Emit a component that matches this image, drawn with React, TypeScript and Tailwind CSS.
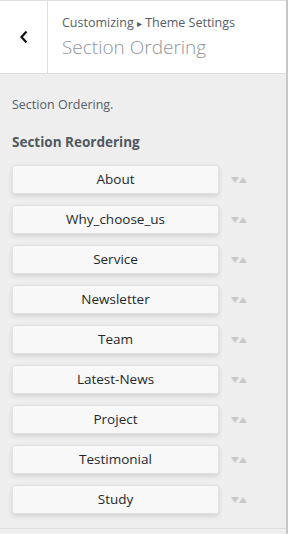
const sections = [
  'About',
  'Why_choose_us',
  'Service',
  'Newsletter',
  'Team',
  'Latest-News',
  'Project',
  'Testimonial',
  'Study',
];

function Arrows() {
  return (
    <svg width="16" height="6" viewBox="0 0 16 6" className="ml-[12px] shrink-0">
      <polygon points="0,0 8,0 4,6" fill="#c8c8c8" />
      <polygon points="8,6 16,6 12,0" fill="#c8c8c8" />
    </svg>
  );
}

export default function App() {
  return (
    <div
      className="flex h-[534px] w-[288px] overflow-hidden bg-[#eeeeee] text-[#555d66]"
      style={{ fontFamily: '"Open Sans", "Noto Sans", sans-serif' }}
    >
      <div className="flex min-w-0 flex-1 flex-col">
        <header className="flex h-[74px] shrink-0 border-y border-[#dddddd] bg-white">
          <button className="flex w-[48px] shrink-0 items-center justify-center border-r border-[#dddddd] text-black">
            <svg width="10" height="14" viewBox="0 0 10 14">
              <path d="M7.5 1.5 L2.5 7 L7.5 12.5" fill="none" stroke="#111" strokeWidth="2.2" />
            </svg>
          </button>
          <div className="flex flex-col pl-[14px] pt-[13px]">
            <span className="text-[12.5px] leading-[18px] text-[#555d66]">
              Customizing <span className="text-[10px]">▸</span> Theme Settings
            </span>
            <span className="mt-[2px] text-[19px] font-light leading-[26px] text-[#8f959a]">
              Section Ordering
            </span>
          </div>
        </header>
        <div className="flex flex-1 flex-col px-[12px] pt-[22px]">
          <p className="text-[12.5px] leading-[18px]">Section Ordering.</p>
          <h3 className="mt-[18px] text-[13.5px] font-bold leading-[20px] text-[#50575e]">
            Section Reordering
          </h3>
          <ul className="mt-[13px] flex flex-col gap-[11px]">
            {sections.map((s) => (
              <li key={s} className="flex items-center">
                <div className="flex h-[29px] w-[207px] items-center justify-center rounded-[3px] border border-[#e2e2e2] bg-[#f8f8f8] text-[13.5px] text-[#23282d] shadow-[0_2px_5px_rgba(0,0,0,0.12)]">
                  {s}
                </div>
                <Arrows />
              </li>
            ))}
          </ul>
        </div>
        <div className="mb-[5px] h-px shrink-0 bg-[#dddddd]" />
      </div>
      <div className="w-[2px] shrink-0 bg-[#c7c7c7]" />
    </div>
  );
}
